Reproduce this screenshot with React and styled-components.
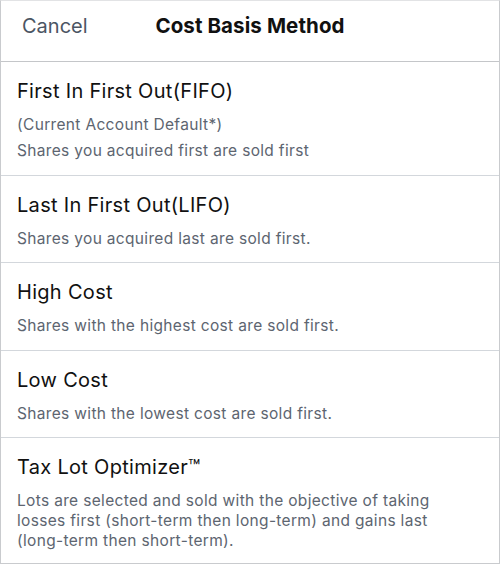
import styled, { createGlobalStyle } from 'styled-components'

const GlobalStyle = createGlobalStyle`
	html, body {
		margin: 0;
		padding: 0;
		background: #ffffff;
	}
	body {
		font-family: Inter, "Noto Sans", "Liberation Sans", sans-serif;
		-webkit-font-smoothing: antialiased;
	}
`

const Sheet = styled.div`
	width: 500px;
	height: 564px;
	box-sizing: border-box;
	border: 1px solid #c9cbce;
	border-top-color: #e2e3e5;
	background: #ffffff;
	display: flex;
	flex-direction: column;
	overflow: hidden;
`

const Header = styled.header`
	position: relative;
	height: 61px;
	box-sizing: border-box;
	padding-top: 12px;
	flex-shrink: 0;
	display: flex;
	align-items: flex-start;
	justify-content: center;
	border-bottom: 1px solid #c4c6c9;
`

const CancelButton = styled.button`
	position: absolute;
	left: 21px;
	top: 12px;
	background: none;
	border: none;
	padding: 0;
	font-family: inherit;
	font-size: 20px;
	line-height: 26px;
	color: #4b5563;
	cursor: pointer;
`

const Title = styled.h1`
	margin: 0;
	font-size: 20.5px;
	line-height: 26px;
	font-weight: 700;
	color: #111111;
	letter-spacing: 0.1px;
`

const List = styled.ul`
	list-style: none;
	margin: 0;
	padding: 0;
`

const Option = styled.li`
	padding: 17px 16px 13.5px;
	border-bottom: 1px solid #d3d7dc;
	cursor: pointer;
	&:last-child {
		border-bottom: none;
	}
`

const OptionName = styled.div`
	font-size: 20px;
	line-height: 24px;
	color: #111111;
	letter-spacing: 0.3px;
`

const Notes = styled.div`
	margin-top: 12px;
	display: flex;
	flex-direction: column;
	gap: ${(p) => p.$gap}px;
`

const Note = styled.p`
	margin: 0;
	max-width: 440px;
	font-size: 15.5px;
	line-height: 20px;
	color: #5d6570;
	letter-spacing: 0.33px;
`

const options = [
	{
		name: 'First In First Out(FIFO)',
		notes: [ '(Current Account Default*)', 'Shares you acquired first are sold first' ],
		gap: 6
	},
	{ name: 'Last In First Out(LIFO)', notes: [ 'Shares you acquired last are sold first.' ] },
	{ name: 'High Cost', notes: [ 'Shares with the highest cost are sold first.' ] },
	{ name: 'Low Cost', notes: [ 'Shares with the lowest cost are sold first.' ] },
	{
		name: 'Tax Lot Optimizer™',
		notes: [
			'Lots are selected and sold with the objective of taking losses first (short-term then long-term) and gains last (long-term then short-term).'
		]
	}
]

const App = () => {
	return (
		<>
			<GlobalStyle />
			<Sheet>
				<Header>
					<CancelButton>Cancel</CancelButton>
					<Title>Cost Basis Method</Title>
				</Header>
				<List>
					{options.map((opt, i) => (
						<Option key={i}>
							<OptionName>{opt.name}</OptionName>
							<Notes $gap={opt.gap || 0}>
								{opt.notes.map((n, j) => <Note key={j}>{n}</Note>)}
							</Notes>
						</Option>
					))}
				</List>
			</Sheet>
		</>
	)
}

export default App
